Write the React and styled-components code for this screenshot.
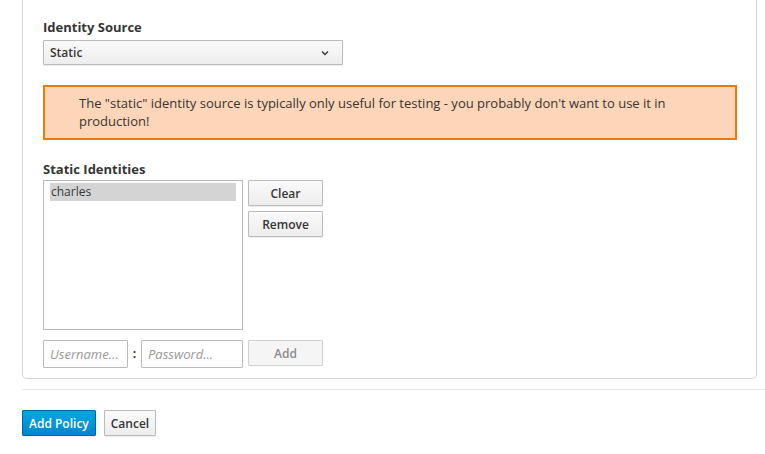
import { useState } from 'react';
import styled, { createGlobalStyle } from 'styled-components';

const GlobalStyle = createGlobalStyle`
  html, body {
    margin: 0;
    padding: 0;
    background: #fff;
    font-family: "Open Sans", "Liberation Sans", sans-serif;
    font-size: 12px;
    color: #363636;
  }
  * { box-sizing: border-box; }
`;

const Page = styled.div`
  width: 765px;
  height: 454px;
  overflow: hidden;
`;

const Panel = styled.div`
  margin-left: 22px;
  width: 735px;
  padding: 19px 19px 10px 20px;
  border: 1px solid #d4d4d4;
  border-top: none;
  border-radius: 0 0 5px 5px;
`;

const Label = styled.div`
  font-weight: 700;
  font-size: 13px;
  line-height: 17px;
  margin-bottom: ${p => p.$gap || '4px'};
  color: #363636;
`;

const Select = styled.div`
  width: 300px;
  height: 25px;
  display: flex;
  align-items: center;
  justify-content: space-between;
  padding: 0 13px 0 6px;
  border: 1px solid #bbb;
  border-radius: 1px;
  background: linear-gradient(#fafafa, #ededed);
  box-shadow: 0 1px 1px rgba(0, 0, 0, 0.08);
  font-weight: 600;
  color: #363636;
`;

const Alert = styled.div`
  margin-top: 20px;
  min-height: 54px;
  padding: 7px 20px 8px 34px;
  background: #fdd5b8;
  border: 2px solid #ec7a08;
  font-size: 13px;
  line-height: 18px;
  color: #363636;
`;

const Section = styled.div`
  margin-top: 21px;
`;

const ListRow = styled.div`
  display: flex;
  gap: 5px;
  align-items: flex-start;
`;

const ListBox = styled.div`
  width: 200px;
  height: 150px;
  border: 1px solid #bbb;
  padding: 2px 6px;
  background: #fff;
`;

const ListItem = styled.div`
  height: 18px;
  line-height: 17px;
  padding: 0 1px;
  background: ${p => (p.$selected ? '#d4d4d4' : 'transparent')};
  color: #363636;
`;

const ButtonCol = styled.div`
  display: flex;
  flex-direction: column;
  gap: 5px;
`;

const Button = styled.button`
  height: 26px;
  width: ${p => p.$width || 'auto'};
  padding: 0 6px;
  font-family: inherit;
  font-size: 12px;
  font-weight: 600;
  border-radius: 1px;
  cursor: pointer;
  border: 1px solid #bbb;
  color: #363636;
  background: linear-gradient(#fafafa, #ededed);
  box-shadow: 0 1px 1px rgba(0, 0, 0, 0.08);

  &:disabled {
    color: #8b8d8f;
    background: #f5f5f5;
    border-color: #d1d1d1;
    box-shadow: none;
    cursor: default;
  }
`;

const PrimaryButton = styled(Button)`
  color: #fff;
  border-color: #00659c;
  background: linear-gradient(#00a8e1, #0085cf);
`;

const AddRow = styled.div`
  display: flex;
  align-items: flex-start;
  margin-top: 10px;
`;

const Input = styled.input`
  width: ${p => p.$width};
  height: 28px;
  padding: 0 6px;
  border: 1px solid #bbb;
  border-radius: 1px;
  font-family: inherit;
  font-size: 13px;
  color: #363636;
  outline: none;

  &::placeholder {
    color: #999;
    font-style: italic;
  }
`;

const Colon = styled.span`
  width: 13px;
  text-align: center;
  line-height: 28px;
  font-weight: 700;
`;

const Divider = styled.hr`
  margin: 10px 0 0 22px;
  border: none;
  border-top: 1px solid #e6e6e6;
  height: 0;
`;

const Footer = styled.div`
  display: flex;
  gap: 8px;
  margin: 20px 0 0 22px;
`;

function Chevron() {
  return (
    <svg width="8" height="6" viewBox="0 0 8 6">
      <polyline points="1,1.5 4,4.5 7,1.5" fill="none" stroke="#363636" strokeWidth="1.4" />
    </svg>
  );
}

export default function App() {
  const [user, setUser] = useState('');
  const [pass, setPass] = useState('');

  return (
    <Page>
      <GlobalStyle />
      <Panel>
        <Label>Identity Source</Label>
        <Select>
          <span>Static</span>
          <Chevron />
        </Select>
        <Alert>
          The "static" identity source is typically only useful for testing - you probably don't want to use it in production!
        </Alert>
        <Section>
          <Label $gap="2px">Static Identities</Label>
          <ListRow>
            <ListBox>
              <ListItem $selected>charles</ListItem>
            </ListBox>
            <ButtonCol>
              <Button $width="75px">Clear</Button>
              <Button $width="75px">Remove</Button>
            </ButtonCol>
          </ListRow>
          <AddRow>
            <Input $width="85px" placeholder="Username..." value={user} onChange={e => setUser(e.target.value)} />
            <Colon>:</Colon>
            <Input $width="102px" type="password" placeholder="Password..." value={pass} onChange={e => setPass(e.target.value)} />
            <Button $width="75px" disabled style={{ marginLeft: '5px' }}>Add</Button>
          </AddRow>
        </Section>
      </Panel>
      <Divider />
      <Footer>
        <PrimaryButton>Add Policy</PrimaryButton>
        <Button>Cancel</Button>
      </Footer>
    </Page>
  );
}
